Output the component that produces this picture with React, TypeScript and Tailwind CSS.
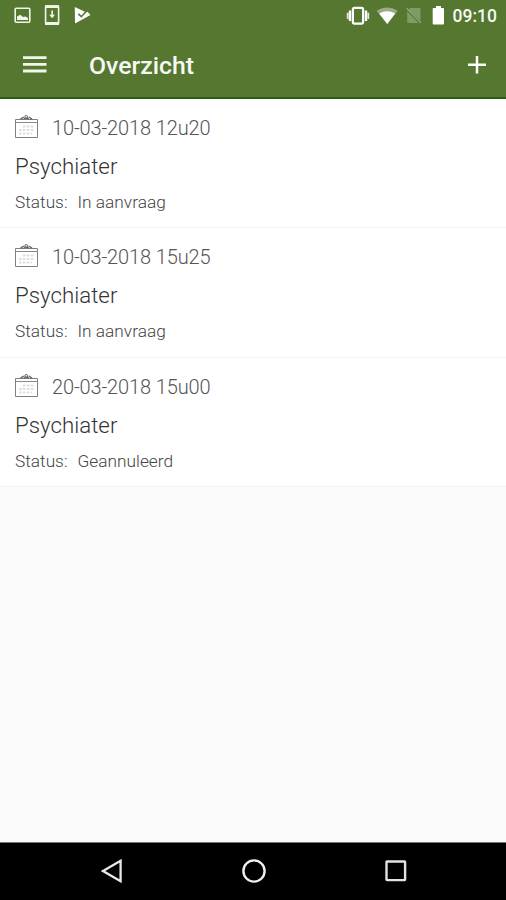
import React from "react";

const appointments = [
  { date: "10-03-2018 12u20", title: "Psychiater", status: "In aanvraag" },
  { date: "10-03-2018 15u25", title: "Psychiater", status: "In aanvraag" },
  { date: "20-03-2018 15u00", title: "Psychiater", status: "Geannuleerd" },
];

function CalendarIcon() {
  return (
    <svg width="24" height="24" viewBox="0 0 24 24" fill="none" stroke="#6f6f6f" strokeWidth="1">
      <path d="M1.5 4.5H23.5V22.5H1.5Z" stroke="#808080" />
      <path d="M1.5 7.5H23.5" stroke="#8a8a8a" />
      <path d="M6.5 4.2L9.8 2M18 4.2L14.7 2" stroke="#666" strokeWidth="1.4" />
      <circle cx="12.2" cy="1.9" r="1.4" stroke="#666" />
      <path d="M9.5 4L12.2 3L15 4" stroke="#555" />
      <path
        d="M9 11.5H20M5 15H20M5 18.5H18"
        stroke="#dedede"
        strokeWidth="2"
        strokeDasharray="2.6 1.3"
      />
    </svg>
  );
}

function StatusBar() {
  return (
    <div className="flex h-8 items-start justify-between pl-3.5 pr-[9px]">
      <div className="flex h-8 items-center">
        <svg width="78" height="32" viewBox="14 0 78 32" fill="none">
          <rect x="15.2" y="8.2" width="14.6" height="14" rx="1" stroke="#f1f5e9" strokeWidth="1.6" />
          <path d="M17 20V16.5L20.3 14.8L23 17L25.5 16.4L28 18V20Z" fill="#f1f5e9" />
          <rect x="45.6" y="6" width="13" height="18.3" rx="1" stroke="#f1f5e9" strokeWidth="1.6" />
          <path d="M45 5.2H59V8H45ZM45 22H59V25H45Z" fill="#f1f5e9" />
          <path d="M51.3 10.5H53V14.8H55L52.1 18.3L49.2 14.8H51.3Z" fill="#f1f5e9" />
          <path d="M74.8 7L86 12.3L87.5 11.8L90.5 15L75 23.5Z" fill="white" />
          <path d="M78.3 13.8L81.3 16.7L87.2 10.2" stroke="#557730" strokeWidth="1.6" />
        </svg>
      </div>
      <div className="flex h-8 items-center gap-[7px]">
        <svg width="100" height="32" viewBox="346 0 100 32" fill="none">
          <rect x="352.9" y="7.8" width="10.2" height="15.8" rx="1.5" stroke="white" strokeWidth="2.2" />
          <path d="M350 10.5V21M366 10.5V21" stroke="white" strokeWidth="2.4" />
          <path d="M347.7 12.7V19M368.3 12.7V19" stroke="#e2e9da" strokeWidth="1.8" />
          <path d="M376.7 10.8Q387.2 4 397.7 10.8L387.2 24Z" fill="#99ad83" />
          <path d="M379.2 13.5Q387.2 9 395.2 13.5L387.2 24Z" fill="white" />
          <path d="M410.3 8H420.5V20.7L408.6 9.6ZM407.2 11.2L418.5 23H407.2Z" fill="#809b65" />
          <path d="M406.5 8L421 23" stroke="#90a779" strokeWidth="1.2" />
          <path d="M436 6H441V8H443.2Q444 8 444 9V23.5Q444 24.5 443.2 24.5H433.5Q432.7 24.5 432.7 23.5V9Q432.7 8 433.5 8H436Z" fill="white" />
        </svg>
        <span className="text-[17.5px] font-medium leading-8 text-[#f6f9f2]">09:10</span>
      </div>
    </div>
  );
}

function AppBar() {
  return (
    <div className="flex h-[67px] items-center justify-between border-b-2 border-[#2e5c17] pl-[23px] pr-5">
      <div className="flex items-center gap-[42px]">
        <svg width="24" height="18" viewBox="0 0 24 18" fill="none" stroke="#f2f6ec" strokeWidth="2.8">
          <path d="M0 1.6H23.5M0 8.3H23.5M0 15H23.5" />
        </svg>
        <h1 className="pt-[3px] text-[24.8px] font-medium leading-8 text-[#f6f9f2]">Overzicht</h1>
      </div>
      <svg width="18" height="18" viewBox="0 0 18 18" fill="none" stroke="white" strokeWidth="2.5">
        <path d="M9 0V17.5M0 8.7H18" />
      </svg>
    </div>
  );
}

export default function App() {
  return (
    <div className="flex h-[900px] w-[506px] flex-col bg-[#fafafa] font-['Roboto',sans-serif]">
      <header className="bg-[#557730]">
        <StatusBar />
        <AppBar />
      </header>
      <main className="grow">
        {appointments.map((a) => (
          <article
            key={a.date}
            className="h-[129.3px] border-b border-[#f4f4f4] bg-white pl-[15px] pt-[15px] font-light"
          >
            <div className="flex h-7 items-center gap-[14px]">
              <span className="-ml-px -mt-0.5">
                <CalendarIcon />
              </span>
              <span className="text-[20px] leading-7 tracking-[-0.12px] text-[#555]">{a.date}</span>
            </div>
            <h2 className="mt-2.5 text-[22.3px] leading-7 text-[#333]">{a.title}</h2>
            <p className="mt-2.5 flex gap-2.5 text-[17.3px] leading-6 text-[#444]">
              <span>Status:</span>
              <span>{a.status}</span>
            </p>
          </article>
        ))}
      </main>
      <nav className="flex h-[58px] items-center justify-between border-t border-[#777] bg-black pb-0.5 pl-[101px] pr-[99px]">
        <svg width="22" height="24" viewBox="0 0 22 24" fill="none" stroke="#e8e8e8" strokeWidth="2.3">
          <path d="M2 12L19.6 1.8V22.2Z" />
        </svg>
        <svg width="24" height="24" viewBox="0 0 24 24" fill="none" stroke="#f0f0f0" strokeWidth="2.4">
          <circle cx="12" cy="12" r="10.6" />
        </svg>
        <svg width="22" height="22" viewBox="0 0 22 22" fill="none" stroke="#e2e2e2" strokeWidth="2.4">
          <rect x="1.5" y="1.5" width="18.6" height="18.6" rx="0.5" />
        </svg>
      </nav>
    </div>
  );
}
